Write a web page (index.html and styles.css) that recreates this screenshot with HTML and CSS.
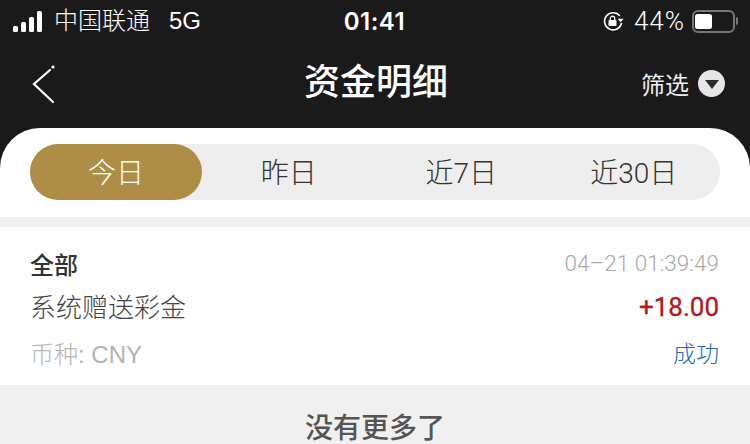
FILE: index.html
```html
<!DOCTYPE html>
<html lang="zh-CN">
<head>
    <meta charset="UTF-8">
    <meta name="viewport" content="width=device-width, initial-scale=1.0">
    <title>资金明细</title>
    <link rel="stylesheet" href="styles.css">
</head>
<body>
    <header class="top">
        <div class="status-bar">
            <div class="status-left">
                <div class="signal"><i></i><i></i><i></i><i></i></div>
                <span class="carrier">中国联通</span>
                <span class="network">5G</span>
            </div>
            <div class="clock">01:41</div>
            <div class="status-right">
                <svg class="lock-icon" width="21" height="20" viewBox="0 0 21 20">
                    <path d="M16.800 4.800A8.600 8.600 0 1 0 18.600 12" fill="none" stroke="#fff" stroke-width="1.600"/>
                    <path d="M14.600 7.800h6l-3 3.400z" fill="#fff"/>
                    <rect x="5.500" y="9" width="8" height="6" rx="1" fill="#fff"/>
                    <path d="M7.300 9V7.400a2.200 2.200 0 0 1 4.400 0V9" fill="none" stroke="#fff" stroke-width="1.300"/>
                </svg>
                <span class="percent">44%</span>
                <div class="battery"><div class="battery-level"></div></div>
                <div class="battery-cap"></div>
            </div>
        </div>
        <div class="nav-bar">
            <svg class="back" width="26" height="42" viewBox="0 0 26 42">
                <circle cx="23" cy="5" r="1.600" fill="#fff"/>
                <path d="M20 8L4 22L23 40" fill="none" stroke="#fff" stroke-width="2.200" stroke-linecap="round"/>
            </svg>
            <h1 class="title">资金明细</h1>
            <div class="filter">
                <span>筛选</span>
                <span class="filter-icon"><span class="filter-arrow"></span></span>
            </div>
        </div>
    </header>
    <div class="sheet-wrap">
        <div class="sheet">
            <div class="tabs">
                <div class="tab active">今日</div>
                <div class="tab">昨日</div>
                <div class="tab">近7日</div>
                <div class="tab">近30日</div>
            </div>
        </div>
    </div>
    <div class="record">
        <div class="row row-head">
            <span class="kind">全部</span>
            <span class="time">04–21 01:39:49</span>
        </div>
        <div class="row row-main">
            <span class="desc">系统赠送彩金</span>
            <span class="amount">+18.00</span>
        </div>
        <div class="row row-foot">
            <span class="currency">币种: CNY</span>
            <span class="state">成功</span>
        </div>
    </div>
    <div class="no-more">没有更多了</div>
</body>
</html>
```

FILE: styles.css
```css
* {
    box-sizing: border-box;
}
body {
    margin: 0;
    height: 444px;
    overflow: hidden;
    background-color: #f0f0f0;
    font-family: "Liberation Sans", "Noto Sans CJK SC", sans-serif;
}
.top {
    height: 128px;
    background-color: #1a1a1a;
    color: #fff;
}
.status-bar {
    height: 42px;
    padding: 0 12px 0 13px;
    display: grid;
    grid-template-columns: 1fr auto 1fr;
    align-items: center;
}
.status-left, .status-right {
    display: flex;
    align-items: center;
}
.status-right {
    justify-content: flex-end;
}
.signal {
    display: flex;
    align-items: flex-end;
    gap: 3px;
    height: 21px;
    margin-right: 10px;
}
.signal i {
    width: 5px;
    border-radius: 1.5px;
    background-color: #fff;
}
.signal i:nth-child(1) { height: 6px; }
.signal i:nth-child(2) { height: 10px; }
.signal i:nth-child(3) { height: 15px; }
.signal i:nth-child(4) { height: 21px; }
.carrier {
    margin: -6px 0 0 2px;
    font-size: 24px;
    font-weight: 300;
}
.network {
    font-size: 24px;
    margin: -1px 0 0 19px;
}
.clock {
    font-family: Inter, "Liberation Sans", sans-serif;
    font-size: 24px;
    font-weight: 600;
    letter-spacing: 0.5px;
    margin-left: -2px;
}
.lock-icon {
    margin-right: 10px;
}
.percent {
    font-family: Roboto, "Liberation Sans", sans-serif;
    font-size: 26px;
    font-weight: 300;
    letter-spacing: 1px;
}
.battery {
    width: 43px;
    height: 23px;
    margin-left: 7px;
    padding: 2px 1px;
    border: 2px solid #777;
    border-radius: 6px;
}
.battery-level {
    width: 17px;
    height: 100%;
    border-radius: 2.500px;
    background-color: #fff;
}
.battery-cap {
    width: 2px;
    height: 8px;
    margin-left: 1px;
    border-radius: 0 2px 2px 0;
    background-color: #777;
}
.nav-bar {
    height: 86px;
    padding: 0 25px 4px 30px;
    display: grid;
    grid-template-columns: 1fr auto 1fr;
    align-items: center;
}
.back {
    display: block;
}
.title {
    margin: -1px 0 0 -3px;
    font-size: 36px;
    font-weight: 500;
    line-height: 1;
}
.filter {
    display: flex;
    align-items: center;
    justify-content: flex-end;
    font-size: 24px;
    color: #eee;
}
.filter-icon {
    width: 27px;
    height: 27px;
    margin-left: 9px;
    display: flex;
    align-items: center;
    justify-content: center;
    border-radius: 50%;
    background-color: #e6e6e6;
}
.filter-arrow {
    width: 0;
    height: 0;
    margin-top: 2px;
    border-left: 7px solid transparent;
    border-right: 7px solid transparent;
    border-top: 9px solid #2a2a2a;
}
.sheet-wrap {
    height: 89px;
    background-color: #1a1a1a;
}
.sheet {
    height: 100%;
    padding: 16px 30px 0;
    background-color: #fff;
    border-radius: 40px 40px 0 0;
}
.tabs {
    height: 56px;
    display: grid;
    grid-template-columns: repeat(4, 1fr);
    border-radius: 28px;
    background-color: #eeeeee;
}
.tab {
    padding-bottom: 2px;
    display: flex;
    align-items: center;
    justify-content: center;
    border-radius: 28px;
    font-family: Roboto, "Noto Sans CJK SC", sans-serif;
    font-size: 28px;
    font-weight: 300;
    color: #333;
}
.tab.active {
    width: 172px;
    background-color: #ae8e46;
    color: #fff;
}
.record {
    height: 158px;
    margin-top: 10px;
    padding: 17px 31px 0 30px;
    background-color: #fff;
}
.row {
    display: flex;
    justify-content: space-between;
    align-items: center;
}
.row-head {
    height: 38px;
}
.row-main {
    height: 46px;
}
.row-foot {
    height: 48px;
}
.kind {
    font-size: 24px;
    font-weight: 500;
    color: #333;
}
.time {
    font-family: Roboto, "Liberation Sans", sans-serif;
    font-size: 22.500px;
    font-weight: 300;
    color: #aaa;
}
.desc {
    font-size: 26px;
    font-weight: 300;
    color: #444;
}
.amount {
    font-family: Roboto, "Liberation Sans", sans-serif;
    font-size: 26px;
    color: #b8141a;
    padding-top: 4px;
    -webkit-text-stroke: 0.3px #b8141a;
}
.currency {
    font-weight: 300;
    font-size: 24px;
    color: #b4b4b4;
}
.state {
    font-size: 23px;
    font-weight: 300;
    color: #2066c4;
}
.no-more {
    padding-top: 30px;
    text-align: center;
    font-size: 28px;
    line-height: 28px;
    font-weight: 500;
    color: #555;
}
```
